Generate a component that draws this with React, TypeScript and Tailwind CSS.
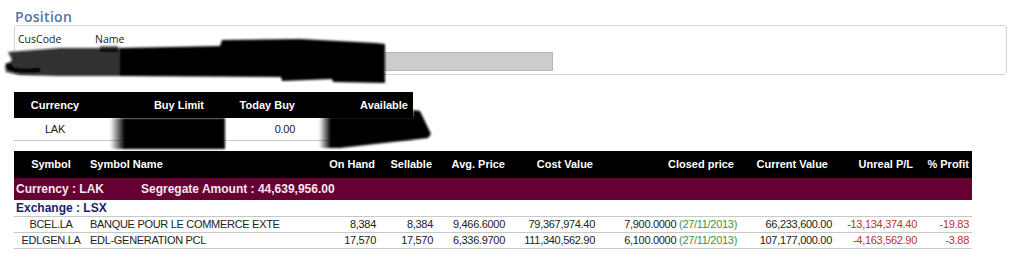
import React from 'react';

const head = "font-['Liberation_Sans',Arial,sans-serif] font-bold text-[11px] text-white";
const body = "font-['Liberation_Sans',Arial,sans-serif] text-[11px] tracking-[-0.3px] text-[#222]";

const rows = [
  {
    symbol: 'BCEL.LA',
    name: 'BANQUE POUR LE COMMERCE EXTE',
    onHand: '8,384',
    sellable: '8,384',
    avg: '9,466.6000',
    cost: '79,367,974.40',
    closed: '7,900.0000',
    date: '(27/11/2013)',
    current: '66,233,600.00',
    pl: '-13,134,374.40',
    pct: '-19.83',
  },
  {
    symbol: 'EDLGEN.LA',
    name: 'EDL-GENERATION PCL',
    onHand: '17,570',
    sellable: '17,570',
    avg: '6,336.9700',
    cost: '111,340,562.90',
    closed: '6,100.0000',
    date: '(27/11/2013)',
    current: '107,177,000.00',
    pl: '-4,163,562.90',
    pct: '-3.88',
  },
];

const cols = 'grid grid-cols-[74px_232px_60px_57px_72px_90px_142px_95px_85px_51px]';

function Scribbles() {
  return (
    <svg className="absolute left-0 top-0 pointer-events-none" width="1011" height="269" viewBox="0 0 1011 269">
      <defs>
        <filter id="soft" x="-10%" y="-20%" width="120%" height="140%">
          <feGaussianBlur stdDeviation="0.9" />
        </filter>
        <linearGradient id="fadeL" x1="0" x2="1" y1="0" y2="0">
          <stop offset="0" stopColor="#000" stopOpacity="0" />
          <stop offset="1" stopColor="#000" stopOpacity="1" />
        </linearGradient>
      </defs>
      <g filter="url(#soft)" fill="#000">
        {/* name / cuscode marker */}
        <path d="M120 48 L220 46 L222 40 L300 39 L376 43 L385 44 L385 83 L333 82 L332 79 L282 81 L281 77 L120 76 Z" />
        <path d="M8 52 L60 48 L120 48 L120 76 L60 76 L20 75 L6 72 L5 66 L12 60 Z" fill="#111" opacity="0.85" />
        <path d="M6 63 C4 70 14 74 40 72 L40 68 C18 70 10 68 12 64 Z" />
        <path d="M100 46 L118 46 L118 52 L100 52 Z" opacity="0.6" />
        {/* buy limit marker */}
        <rect x="124" y="118" width="101" height="31" />
        <rect x="110" y="118" width="15" height="31" fill="url(#fadeL)" />
        {/* available marker */}
        <path d="M330 117 L413 117 L413 110 L420 111 L431 134 L428 138 L340 148 L330 148 Z" />
        <rect x="319" y="117" width="12" height="31" fill="url(#fadeL)" />
      </g>
    </svg>
  );
}

export default function App() {
  return (
    <div className="relative w-[1011px] h-[269px] bg-white overflow-hidden">
      <div className="pl-[14px] pr-[4px] pt-[9px]">
        <div className="h-[16px] leading-[16px] pl-[1px] font-['Open_Sans',sans-serif] font-semibold text-[14px] text-[#5075a8] tracking-[0.3px]">
          Position
        </div>

        <div className="h-[50px] border border-[#d2d2d2] rounded-[3px] pl-[3px] pt-[6px]">
          <div className="flex h-[14px] leading-[14px] font-['Open_Sans',sans-serif] text-[10.5px] text-[#222]">
            <span className="w-[77px]">CusCode</span>
            <span>Name</span>
          </div>
          <div className="mt-[6px] ml-[367px] w-[168px] h-[19px] bg-[#cccccc] border border-[#b8b8b0]" />
        </div>

        {/* account summary */}
        <div className="mt-[17px] w-[399px]">
          <div className={`grid grid-cols-[82px_114px_90px_113px] h-[26px] items-center bg-black ${head}`}>
            <div className="text-center">Currency</div>
            <div className="text-right pr-[6px]">Buy Limit</div>
            <div className="text-right pr-[5px]">Today Buy</div>
            <div className="text-right pr-[5px]">Available</div>
          </div>
          <div className={`grid grid-cols-[82px_114px_90px_113px] h-[23px] items-center border-b border-[#c8c8c8] ${body}`}>
            <div className="text-center">LAK</div>
            <div className="text-right pr-[6px]"></div>
            <div className="text-right pr-[5px]">0.00</div>
            <div className="text-right pr-[5px]"></div>
          </div>
        </div>

        {/* positions */}
        <div className="mt-[10px] w-[958px]">
          <div className={`${cols} h-[27px] items-center bg-black ${head}`}>
            <div className="text-center">Symbol</div>
            <div className="pl-[2px]">Symbol Name</div>
            <div className="text-right pr-[5px]">On Hand</div>
            <div className="text-right pr-[5px]">Sellable</div>
            <div className="text-right pr-[4px]">Avg. Price</div>
            <div className="text-right pr-[6px]">Cost Value</div>
            <div className="text-right pr-[7px]">Closed price</div>
            <div className="text-right pr-[8px]">Current Value</div>
            <div className="text-right pr-[8px]">Unreal P/L</div>
            <div className="text-right pr-[3px]">% Profit</div>
          </div>
          <div className="flex h-[22px] items-center bg-[#660033] pl-[2px] font-['Liberation_Sans',Arial,sans-serif] font-bold text-[12px] text-[#f6e6ee]">
            <span className="w-[125px]">Currency : LAK</span>
            <span>Segregate Amount : 44,639,956.00</span>
          </div>
          <div className="h-[17px] flex items-center pl-[2px] border-b border-[#c8c8c8] font-['Liberation_Sans',Arial,sans-serif] font-bold text-[12px] text-[#1c1c70]">
            Exchange : LSX
          </div>
          {rows.map((r) => (
            <div key={r.symbol} className={`${cols} h-[16px] items-center border-b border-[#c8c8c8] ${body} leading-[15px]`}>
              <div className="text-center">{r.symbol}</div>
              <div className="pl-[2px] whitespace-nowrap">{r.name}</div>
              <div className="text-right pr-[4px]">{r.onHand}</div>
              <div className="text-right pr-[4px]">{r.sellable}</div>
              <div className="text-right pr-[4px]">{r.avg}</div>
              <div className="text-right pr-[4px]">{r.cost}</div>
              <div className="text-right pr-[4px] whitespace-nowrap">
                {r.closed} <span className="text-[#3a963a]">{r.date}</span>
              </div>
              <div className="text-right pr-[4px]">{r.current}</div>
              <div className="text-right pr-[4px] text-[#c0302c]">{r.pl}</div>
              <div className="text-right pr-[3px] text-[#c0302c]">{r.pct}</div>
            </div>
          ))}
        </div>
      </div>
      <Scribbles />
    </div>
  );
}
